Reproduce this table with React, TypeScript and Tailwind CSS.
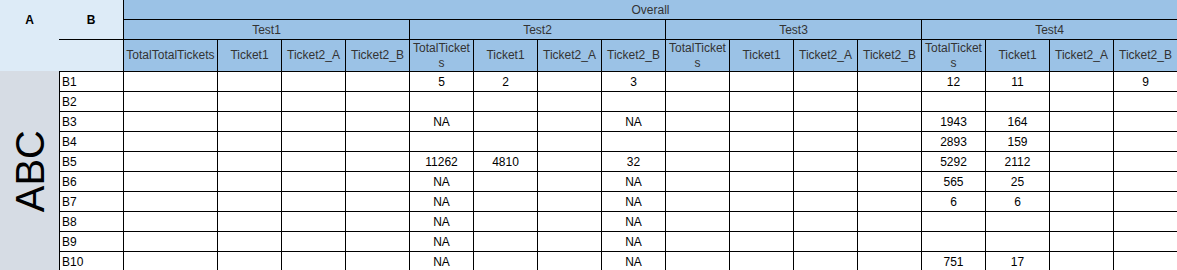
import React from 'react';

const tests = ['Test1', 'Test2', 'Test3', 'Test4'];

const columns = [
  'TotalTotalTickets', 'Ticket1', 'Ticket2_A', 'Ticket2_B',
  'TotalTickets', 'Ticket1', 'Ticket2_A', 'Ticket2_B',
  'TotalTickets', 'Ticket1', 'Ticket2_A', 'Ticket2_B',
  'TotalTickets', 'Ticket1', 'Ticket2_A', 'Ticket2_B',
];

// one entry per row: label, then the 16 values (Test1..Test4)
const rows: { label: string; values: string[] }[] = [
  { label: 'B1', values: ['', '', '', '', '5', '2', '', '3', '', '', '', '', '12', '11', '', '9'] },
  { label: 'B2', values: Array(16).fill('') },
  { label: 'B3', values: ['', '', '', '', 'NA', '', '', 'NA', '', '', '', '', '1943', '164', '', ''] },
  { label: 'B4', values: ['', '', '', '', '', '', '', '', '', '', '', '', '2893', '159', '', ''] },
  { label: 'B5', values: ['', '', '', '', '11262', '4810', '', '32', '', '', '', '', '5292', '2112', '', ''] },
  { label: 'B6', values: ['', '', '', '', 'NA', '', '', 'NA', '', '', '', '', '565', '25', '', ''] },
  { label: 'B7', values: ['', '', '', '', 'NA', '', '', 'NA', '', '', '', '', '6', '6', '', ''] },
  { label: 'B8', values: ['', '', '', '', 'NA', '', '', 'NA', '', '', '', '', '', '', '', ''] },
  { label: 'B9', values: ['', '', '', '', 'NA', '', '', 'NA', '', '', '', '', '', '', '', ''] },
  { label: 'B10', values: ['', '', '', '', 'NA', '', '', 'NA', '', '', '', '', '751', '17', '', ''] },
];

const headCell = 'flex items-center justify-center bg-[#9bc2e6] text-[#333] border-l border-black';

export default function App() {
  return (
    <div className="w-[1177px] h-[270px] overflow-hidden bg-white font-['Liberation_Sans',Arial,sans-serif] text-[12px]">
      <div className="grid grid-cols-[59px_64px_94px_repeat(15,64px)] grid-rows-[19px_20px_32px_repeat(10,20px)]">
        {/* top-left corner */}
        <div className="row-span-2 flex items-center justify-center bg-[#ddebf7] font-bold text-black">A</div>
        <div className="row-span-2 flex items-center justify-center bg-[#ddebf7] font-bold text-black">B</div>
        <div className={`col-span-16 ${headCell}`}>Overall</div>

        {tests.map((t) => (
          <div key={t} className={`col-span-4 border-t ${headCell}`}>
            {t}
          </div>
        ))}

        <div className="bg-[#ddebf7]" />
        <div className="bg-[#ddebf7] border-t border-black" />
        {columns.map((c, i) => (
          <div
            key={i}
            className={`border-t text-center leading-[15px] break-all ${i === 0 ? 'px-0' : 'px-[2px]'} ${headCell}`}
          >
            {c}
          </div>
        ))}

        {/* side label */}
        <div className="row-span-10 flex items-center justify-center bg-[#d6dce4]">
          <span className="[writing-mode:vertical-rl] rotate-180 text-[40px] leading-none text-black">ABC</span>
        </div>

        {rows.map((r) => (
          <React.Fragment key={r.label}>
            <div className="flex items-center pl-[2px] border-l border-t border-black text-black">{r.label}</div>
            {r.values.map((v, i) => (
              <div key={i} className="flex items-center justify-center border-l border-t border-black text-black">
                {v}
              </div>
            ))}
          </React.Fragment>
        ))}
      </div>
    </div>
  );
}
